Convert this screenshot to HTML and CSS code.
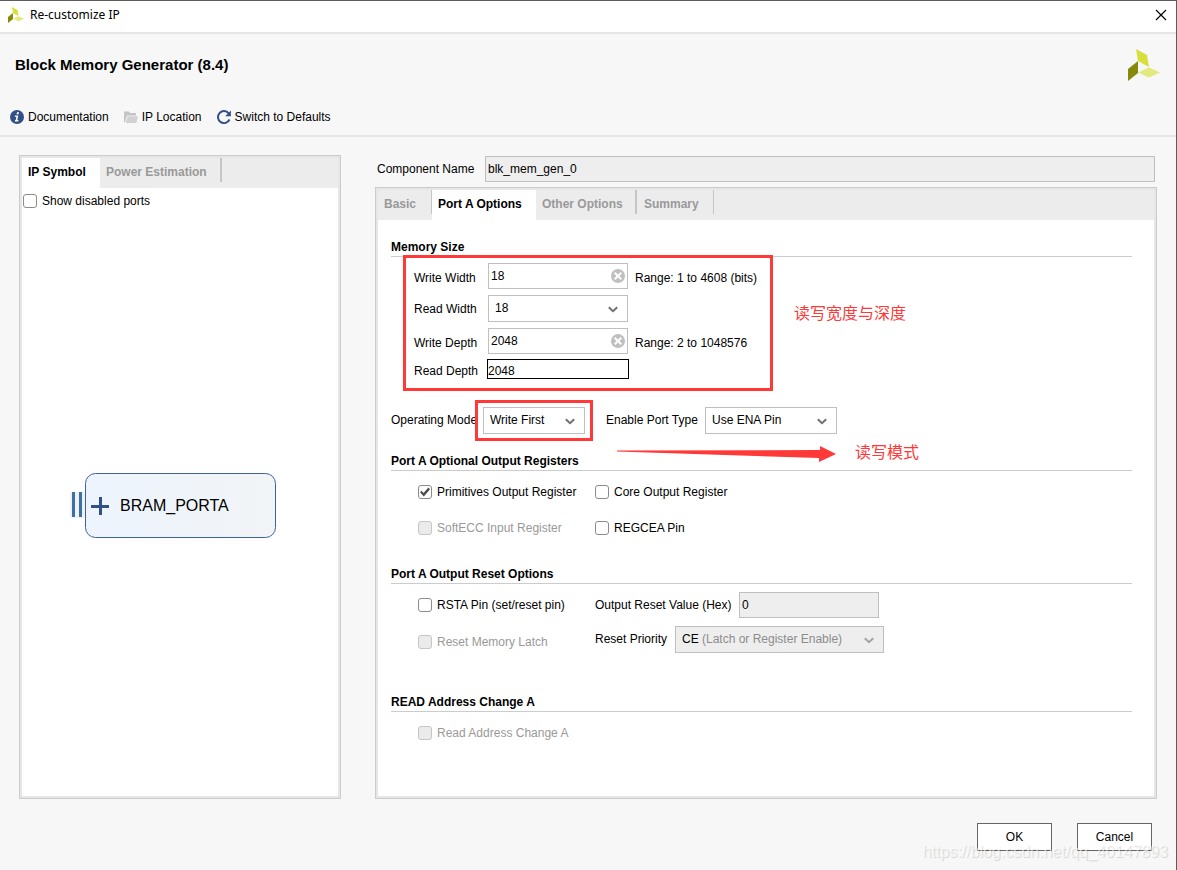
FILE: index.html
```html
<!DOCTYPE html>
<html lang="en">
<head>
<meta charset="utf-8">
<title>Re-customize IP</title>
<link rel="stylesheet" href="styles.css">
</head>
<body>
<svg class="defs" aria-hidden="true">
  <symbol id="logo" viewBox="0 0 32 32">
    <path fill="#d7e03a" d="M8 0l11 6 2 12L10 12z"/>
    <path fill="#858a0c" d="M0 20l10-8v12L0 32z"/>
    <path fill="#e3e97c" d="M10 23.500l11-5 11 5-11 5z"/>
  </symbol>
  <symbol id="chevron" viewBox="0 0 10 7">
    <path d="M.8 1.200L5 5.200l4.200-4" fill="none" stroke="currentColor" stroke-width="2"/>
  </symbol>
  <symbol id="clear" viewBox="0 0 14 14">
    <circle cx="7" cy="7" r="7" fill="#bfbfbf"/>
    <path d="M3.700 3.700l6.600 6.600M10.300 3.700l-6.600 6.600" stroke="#fff" stroke-width="2"/>
  </symbol>
</svg>
<div class="window">
  <header class="titlebar">
    <svg class="titlebar-logo"><use href="#logo"/></svg>
    <span class="titlebar-text">Re-customize IP</span>
    <button class="close" aria-label="Close"><svg width="12" height="12" viewBox="0 0 12 12"><path d="M1 1l10 10M11 1L1 11" stroke="#000" stroke-width="1.200"/></svg></button>
  </header>

  <section class="banner">
    <div class="banner-top">
      <h1>Block Memory Generator (8.4)</h1>
      <svg class="banner-logo"><use href="#logo"/></svg>
    </div>
    <nav class="toolbar">
      <button class="tool"><svg width="14" height="14" viewBox="0 0 14 14"><circle cx="7" cy="7" r="7" fill="#324f87"/><path fill="#fff" d="M7 2.300h2l-.4 1.900h-2zM5 5.400h3.300L7.300 10h1.200l-.3 1.400H4.800L5.100 10h.6l.7-3.200H4.700z"/></svg>Documentation</button>
      <button class="tool"><svg width="14" height="14" viewBox="0 0 14 14"><path fill="#c4c4c4" d="M0 1.500h5l1 1.500h6v2.500H3L1 12H0z"/><path fill="#d2d2d2" d="M3.600 6.300H14L12.400 13H1.600z"/></svg>IP Location</button>
      <button class="tool"><svg width="14" height="14" viewBox="0 0 14 14"><path d="M11.700 3.400A6 6 0 1 0 12.500 9.500" fill="none" stroke="#324f87" stroke-width="2"/><path fill="#324f87" d="M13.900.5v5.700H8.200z"/></svg>Switch to Defaults</button>
    </nav>
  </section>

  <main class="content">
    <section class="panel symbol-panel">
      <div class="tabs" role="tablist">
        <button class="tab active" role="tab" aria-selected="true">IP Symbol</button>
        <button class="tab power" role="tab">Power Estimation</button>
      </div>
      <label class="check show-ports"><input type="checkbox">Show disabled ports</label>
      <div class="canvas">
        <svg width="220" height="66" viewBox="0 0 220 66" role="img">
          <defs><linearGradient id="block"><stop offset="0" stop-color="#edf4fe"/><stop offset=".7" stop-color="#f0f4f8"/><stop offset="1" stop-color="#f2f4f6"/></linearGradient></defs>
          <path fill="#edf3fb" d="M0 19h15v26H0z"/>
          <path fill="#3f6fa3" d="M2 19h3v25H2zM9 19h3v25H9z"/>
          <rect x="15.500" y=".5" width="190" height="64" rx="10" fill="url(#block)" stroke="#41609f"/>
          <path fill="#324f87" d="M21 32h18v3H21zM29 24h3v18h-3z"/>
          <text class="block-name" x="50" y="38">BRAM_PORTA</text>
        </svg>
      </div>
    </section>

    <section class="config">
      <div class="component">
        <label for="component-name">Component Name</label>
        <input class="field" id="component-name" value="blk_mem_gen_0" readonly>
      </div>
      <div class="panel">
        <div class="tabs" role="tablist">
          <button class="tab basic" role="tab">Basic</button>
          <button class="tab active port" role="tab" aria-selected="true">Port A Options</button>
          <button class="tab other" role="tab">Other Options</button>
          <button class="tab summary" role="tab">Summary</button>
        </div>
        <form class="form">
          <h2>Memory Size</h2>
          <div class="memory">
            <label for="ww">Write Width</label>
            <span class="box"><input class="field" id="ww" value="18"><svg class="clear"><use href="#clear"/></svg></span>
            <span class="range">Range: 1 to 4608 (bits)</span>
            <label for="rw">Read Width</label>
            <span class="box"><select id="rw"><option>18</option></select><svg class="chevron"><use href="#chevron"/></svg></span>
            <span></span>
            <label for="wd">Write Depth</label>
            <span class="box"><input class="field" id="wd" value="2048"><svg class="clear"><use href="#clear"/></svg></span>
            <span class="range">Range: 2 to 1048576</span>
            <label for="rd">Read Depth</label>
            <input class="plain" id="rd" value="2048" readonly>
            <div class="mark memory-mark"></div>
            <div class="note memory-note">读写宽度与深度</div>
          </div>

          <div class="modes">
            <label class="mode-label" for="mode">Operating Mode</label>
            <span class="box mode-box"><select id="mode"><option>Write First</option></select><svg class="chevron"><use href="#chevron"/></svg><span class="mark mode-mark"></span></span>
            <label class="port-label" for="port-type">Enable Port Type</label>
            <span class="box port-box"><select id="port-type"><option>Use ENA Pin</option></select><svg class="chevron"><use href="#chevron"/></svg></span>
            <svg class="arrow" viewBox="0 0 219 17"><path fill="#ff3838" d="M0 4.500L203 4V0l16 8-17 8v-4L0 5.500z"/></svg>
            <div class="note mode-note">读写模式</div>
          </div>

          <h2>Port A Optional Output Registers</h2>
          <div class="checks">
            <label class="check"><input type="checkbox" checked>Primitives Output Register</label>
            <label class="check"><input type="checkbox">Core Output Register</label>
            <label class="check off"><input type="checkbox" disabled>SoftECC Input Register</label>
            <label class="check"><input type="checkbox">REGCEA Pin</label>
          </div>

          <h2>Port A Output Reset Options</h2>
          <div class="resets">
            <label class="check"><input type="checkbox">RSTA Pin (set/reset pin)</label>
            <div class="pair">
              <label class="reset-label" for="reset-value">Output Reset Value (Hex)</label>
              <span class="box"><input class="field" id="reset-value" value="0" readonly></span>
            </div>
            <label class="check off latch"><input type="checkbox" disabled>Reset Memory Latch</label>
            <div class="pair">
              <label class="priority-label" for="priority">Reset Priority</label>
              <span class="box priority-box"><select id="priority" disabled><option>CE</option></select><span class="hint">(Latch or Register Enable)</span><svg class="chevron"><use href="#chevron"/></svg></span>
            </div>
          </div>

          <h2>READ Address Change A</h2>
          <div class="checks">
            <label class="check off"><input type="checkbox" disabled>Read Address Change A</label>
          </div>
        </form>
      </div>
    </section>
  </main>

  <footer class="actions">
    <button class="action">OK</button>
    <button class="action">Cancel</button>
  </footer>
  <div class="watermark">https://blog.csdn.net/qq_40147893</div>
</div>
</body>
</html>
```
FILE: styles.css
```css
* { box-sizing: border-box; }
body, h1, h2 { margin: 0; }
body, input, select, button {
  font: 12px/14px "Liberation Sans", "Noto Sans CJK SC", sans-serif;
  color: #000;
}
button { padding: 0; border: 0; background: none; }
svg { display: block; flex: none; }
.defs { position: absolute; width: 0; height: 0; }

.window {
  position: relative;
  display: flex;
  flex-direction: column;
  min-height: 100vh;
  background: #f7f7f7;
  border-top: 1px solid #5c5c5c;
  border-right: 1px solid #5c5c5c;
}

.titlebar {
  display: flex;
  align-items: center;
  gap: 6px;
  height: 33px;
  padding: 0 9px 3px 8px;
  background: #fff;
  border-bottom: 2px solid #e6e6e6;
}
.titlebar-logo { width: 16px; height: 16px; }
.titlebar-text { flex: 1; font-family: "Noto Sans", sans-serif; }

.banner {
  display: flex;
  flex-direction: column;
  justify-content: space-between;
  height: 103px;
  padding: 15px 16px 11px 10px;
  border-bottom: 2px solid #e6e6e6;
}
.banner-top { display: flex; justify-content: space-between; align-items: center; padding-left: 5px; }
.banner-logo { width: 32px; height: 32px; }
h1 { font-size: 15px; line-height: 16px; }
.toolbar { display: flex; gap: 15px; }
.tool { display: flex; align-items: center; gap: 4px; }

.content { flex: 1; display: flex; gap: 34px; padding: 18px 19px 0; }
.panel {
  display: flex;
  flex-direction: column;
  background: #fff;
  border: 1px solid #ccc;
  box-shadow: inset 0 0 0 2px #e6e6e6;
  padding: 2px;
}
.symbol-panel { flex: 0 0 322px; }
.tabs { display: flex; height: 30px; background: #ececec; }
.tab { height: 24px; padding: 3px 6px 0; font-weight: bold; color: #999; text-align: left; border-right: 2px solid #c6c6c6; }
.tab.active { height: 30px; padding: 0 6px 3px; color: #000; background: #fff; border: 0; }
.symbol-panel .tab.active { width: 78px; }
.power { width: 122px; }
.basic { width: 54px; border-right-width: 1px; }
.port { width: 104px; }
.other { width: 101px; }
.summary { width: 77px; padding-left: 7px; border-right-width: 1px; }
.canvas { flex: 1; display: flex; align-items: center; justify-content: center; padding-top: 2px; }
.block-name { font-size: 16px; }

.check { display: flex; align-items: center; gap: 5px; }
.check input {
  appearance: none;
  flex: none;
  width: 14px;
  height: 14px;
  margin: 0;
  background: #fff;
  border: 1px solid #8c8c8c;
  border-radius: 3px;
}
.check input:checked { display: grid; place-items: center; }
.check input:checked::before {
  content: "";
  width: 10px;
  height: 10px;
  background: #4d4d4d;
  clip-path: polygon(0 52%, 16% 38%, 36% 60%, 84% 6%, 100% 22%, 38% 94%);
}
.check input:disabled { background: #ebebeb; border-color: #c6c6c6; }
.off { color: #999; }
.show-ports { padding: 6px 1px; }

.config { flex: 1; display: flex; flex-direction: column; gap: 5px; min-width: 0; }
.config .panel { flex: 1; }
.component { display: flex; align-items: center; gap: 6px; padding: 1px 2px 0; }
.component label { flex: none; width: 102px; }
.field { width: 100%; height: 26px; padding: 0 2px; border: 1px solid #bfbfbf; background: #fff; }
.field:read-only { background: #eee; }
.component .field { flex: 1; min-width: 0; }

.form { padding: 17px 22px 0 13px; }
h2 { height: 20px; font-size: 12px; line-height: 20px; border-bottom: 1px solid #ccc; }

.box { position: relative; display: block; width: 140px; }
select {
  appearance: none;
  display: block;
  width: 100%;
  height: 27px;
  padding: 0 6px 2px;
  border: 1px solid #bfbfbf;
  border-radius: 0;
  background: #fff;
}
select:disabled { background: #eee; color: #000; opacity: 1; }
.chevron { position: absolute; right: 10px; top: 11px; width: 10px; height: 7px; color: #707070; pointer-events: none; }
.clear { position: absolute; right: 3px; top: 6px; width: 14px; height: 14px; }

.memory {
  position: relative;
  display: grid;
  grid-template-columns: 67px 140px 1fr;
  gap: 6px 7px;
  align-items: center;
  padding: 6px 0 0 23px;
}
.memory label, .range { padding-top: 3px; }
.memory label[for="rw"] { padding-top: 0; }
.plain { width: 100%; height: 18px; padding: 4px 0 0; border: 0; outline: 1px solid #000; }
.mark { position: absolute; border: 3px solid #ff3838; pointer-events: none; }
.memory-mark { left: 12px; top: -2px; width: 370px; height: 136px; }
.note { position: absolute; font-size: 16px; line-height: 20px; color: #ff3838; white-space: nowrap; }
.memory-note { left: 403px; top: 47px; }

.modes { position: relative; display: flex; align-items: center; margin: 29px 0 17px; }
.modes label { padding-bottom: 2px; }
.mode-label { width: 92px; white-space: nowrap; }
.mode-box { width: 102px; }
.mode-mark { inset: -7px -8px; }
.port-label { width: 99px; margin-left: 21px; }
.port-box { width: 132px; }
.arrow { position: absolute; left: 226px; top: 39px; width: 219px; height: 17px; }
.mode-note { left: 464px; top: 36px; }

.checks { display: grid; grid-template-columns: 177px 1fr; gap: 22px 0; padding: 14px 0 0 27px; }
.checks + h2 { margin-top: 29px; }
.resets { display: grid; grid-template-columns: 177px 1fr; gap: 8px 0; padding: 8px 0 0 27px; }
.resets + h2 { margin-top: 39px; }
.latch { padding-top: 4px; }
.pair { display: flex; align-items: center; }
.reset-label { width: 144px; }
.priority-label { width: 80px; padding-bottom: 2px; }
.priority-box { width: 209px; }
.priority-box .chevron { color: #a3a3a3; }
.hint { position: absolute; left: 27px; top: 6px; color: #8c8c8c; pointer-events: none; }

.actions { display: flex; justify-content: flex-end; gap: 25px; padding: 24px 24px 19px; }
.action { width: 75px; height: 28px; border: 1px solid #666; background: #fff; }
.watermark {
  position: absolute;
  right: 8px;
  bottom: 8px;
  font-size: 16px;
  line-height: 20px;
  color: rgba(255, 255, 255, .6);
  text-shadow: 1px 1px 1px rgba(0, 0, 0, .14);
  pointer-events: none;
}
```
